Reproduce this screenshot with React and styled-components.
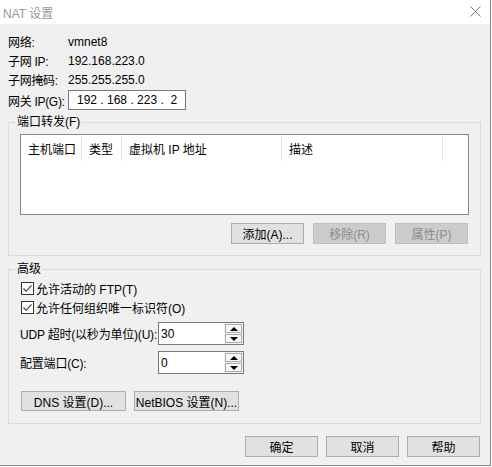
import React from 'react';
import styled, { createGlobalStyle } from 'styled-components';

const Global = createGlobalStyle`
  html, body {
    margin: 0;
    padding: 0;
    background: #ffffff;
  }
  body {
    font-family: "Liberation Sans", "Noto Sans CJK SC", sans-serif;
    font-size: 12px;
    color: #000;
  }
`;

const Window = styled.div`
  display: flex;
  flex-direction: column;
  width: 490px;
  height: 465px;
  background: #f0f0f0;
  border-right: 1px solid #8a8a8a;
  border-bottom: 1px solid #8a8a8a;
`;

const TitleBar = styled.div`
  display: flex;
  align-items: center;
  justify-content: space-between;
  height: 24px;
  padding: 0 9px 0 3px;
  background: #ffffff;
  color: #999999;
  font-size: 12px;
`;

const CloseIcon = styled.svg`
  width: 11px;
  height: 11px;
  margin-top: -2px;
`;

const Body = styled.div`
  display: flex;
  flex-direction: column;
  padding: 8px 9px 0 8px;
`;

const InfoRow = styled.div`
  display: grid;
  grid-template-columns: 60px auto;
  align-items: center;
  height: ${p => (p.$tall ? '20px' : '19px')};
  margin-top: ${p => (p.$tall ? '1px' : '0')};
`;

const InfoLabel = styled.span`
  white-space: nowrap;
  letter-spacing: -0.3px;
`;

const IpBox = styled.div`
  display: flex;
  align-items: center;
  width: 118px;
  height: 20px;
  padding-left: 8px;
  background: #fff;
  border: 1px solid #7a7a7a;
  box-sizing: border-box;
  white-space: pre;
`;

const Group = styled.fieldset`
  margin: ${p => p.$top}px 0 0 0;
  padding: ${p => p.$padTop}px 11px ${p => p.$padBottom}px 11px;
  border: 1px solid #dcdcdc;
  min-width: 0;
`;

const Legend = styled.legend`
  margin-left: -4px;
  padding: 0 1px;
  line-height: 14px;
  font-size: 12px;
`;

const ListBox = styled.div`
  height: 79px;
  background: #fff;
  border: 1px solid #828790;
`;

const ListHeader = styled.div`
  display: flex;
  height: 25px;
  padding-top: 1px;
`;

const HeaderCell = styled.div`
  display: flex;
  align-items: center;
  width: ${p => p.$w}px;
  padding-left: 7px;
  box-sizing: border-box;
  border-right: 1px solid #e5e5e5;
`;

const ButtonRow = styled.div`
  display: flex;
  justify-content: ${p => (p.$start ? 'flex-start' : 'flex-end')};
  gap: ${p => p.$gap || 8}px;
  margin-top: ${p => p.$top || 0}px;
  padding-right: ${p => p.$right || 0}px;
  margin-left: ${p => p.$left || 0}px;
`;

const Button = styled.button`
  width: ${p => p.$w || 73}px;
  height: ${p => p.$h || 21}px;
  padding: 0;
  font-family: inherit;
  font-size: 12px;
  color: ${p => (p.disabled ? '#8d8d8d' : '#000')};
  background: ${p => (p.disabled ? '#cccccc' : '#e1e1e1')};
  border: 1px solid ${p => (p.disabled ? '#bfbfbf' : '#adadad')};
  box-sizing: border-box;
`;

const CheckRow = styled.label`
  display: flex;
  align-items: center;
  gap: 2px;
  height: 19px;
  margin-left: 1px;
`;

const CheckBox = styled.span`
  display: flex;
  align-items: center;
  justify-content: center;
  width: 13px;
  height: 13px;
  background: #fff;
  border: 1px solid #333;
  box-sizing: border-box;
`;

const FieldRow = styled.div`
  display: grid;
  grid-template-columns: 138px 86px;
  align-items: center;
  margin-top: ${p => p.$top}px;
`;

const FieldLabel = styled.span`
  white-space: nowrap;
  letter-spacing: -0.2px;
`;

const Spin = styled.div`
  display: flex;
  height: 23px;
  background: #fff;
  border: 1px solid #7a7a7a;
  box-sizing: border-box;
`;

const SpinValue = styled.div`
  flex: 1;
  display: flex;
  align-items: center;
  padding-left: 2px;
`;

const SpinButtons = styled.div`
  display: flex;
  flex-direction: column;
  gap: 1px;
  width: 17px;
  padding: 1px;
  background: #f0f0f0;
`;

const SpinButton = styled.div`
  flex: 1;
  display: flex;
  align-items: center;
  justify-content: center;
  background: #f7f7f7;
  border: 1px solid #adadad;
`;

const Arrow = styled.span`
  width: 0;
  height: 0;
  border-left: 4px solid transparent;
  border-right: 4px solid transparent;
  ${p => (p.$up ? 'border-bottom: 4px solid #000;' : 'border-top: 4px solid #000;')}
`;

const Footer = styled.div`
  display: flex;
  justify-content: flex-end;
  gap: 8px;
  margin-top: 12px;
  padding-right: 1px;
`;

const Check = () => (
  <svg width="11" height="11" viewBox="0 0 11 11">
    <path d="M1.5 5.5 L4.2 8.3 L9.5 2.3" fill="none" stroke="#333" strokeWidth="1.1" />
  </svg>
);

const Spinner = ({ value }) => (
  <Spin>
    <SpinValue>{value}</SpinValue>
    <SpinButtons>
      <SpinButton><Arrow $up /></SpinButton>
      <SpinButton><Arrow /></SpinButton>
    </SpinButtons>
  </Spin>
);

export default function App() {
  return (
    <>
      <Global />
      <Window>
        <TitleBar>
          <span>NAT 设置</span>
          <CloseIcon viewBox="0 0 11 11">
            <path d="M0.5 0.5 L10.5 10.5 M10.5 0.5 L0.5 10.5" stroke="#777" strokeWidth="1" />
          </CloseIcon>
        </TitleBar>
        <Body>
          <InfoRow><InfoLabel>网络:</InfoLabel><span>vmnet8</span></InfoRow>
          <InfoRow><InfoLabel>子网 IP:</InfoLabel><span>192.168.223.0</span></InfoRow>
          <InfoRow><InfoLabel>子网掩码:</InfoLabel><span>255.255.255.0</span></InfoRow>
          <InfoRow $tall>
            <InfoLabel>网关 IP(G):</InfoLabel>
            <IpBox>192 . 168 . 223 .  2</IpBox>
          </InfoRow>

          <Group $top={5} $padTop={5} $padBottom={11}>
            <Legend>端口转发(F)</Legend>
            <ListBox>
              <ListHeader>
                <HeaderCell $w={61}>主机端口</HeaderCell>
                <HeaderCell $w={40}>类型</HeaderCell>
                <HeaderCell $w={160}>虚拟机 IP 地址</HeaderCell>
                <HeaderCell $w={161}>描述</HeaderCell>
              </ListHeader>
            </ListBox>
            <ButtonRow $top={8} $gap={9} $right={1}>
              <Button>添加(A)...</Button>
              <Button disabled>移除(R)</Button>
              <Button disabled>属性(P)</Button>
            </ButtonRow>
          </Group>

          <Group $top={6} $padTop={3} $padBottom={12}>
            <Legend>高级</Legend>
            <CheckRow><CheckBox><Check /></CheckBox>允许活动的 FTP(T)</CheckRow>
            <CheckRow><CheckBox><Check /></CheckBox>允许任何组织唯一标识符(O)</CheckRow>
            <FieldRow $top={5}>
              <FieldLabel>UDP 超时(以秒为单位)(U):</FieldLabel>
              <Spinner value="30" />
            </FieldRow>
            <FieldRow $top={6}>
              <FieldLabel>配置端口(C):</FieldLabel>
              <Spinner value="0" />
            </FieldRow>
            <ButtonRow $start $top={17} $left={1}>
              <Button $w={105} $h={20}>DNS 设置(D)...</Button>
              <Button $w={105} $h={20}>NetBIOS 设置(N)...</Button>
            </ButtonRow>
          </Group>

          <Footer>
            <Button>确定</Button>
            <Button>取消</Button>
            <Button>帮助</Button>
          </Footer>
        </Body>
      </Window>
    </>
  );
}
